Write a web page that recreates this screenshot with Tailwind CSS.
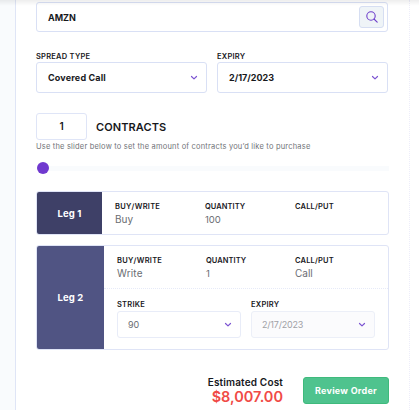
<!DOCTYPE html>
<html lang="en">
<head>
<meta charset="utf-8">
<title>Order</title>
<script src="https://cdn.jsdelivr.net/npm/@tailwindcss/browser@4"></script>
</head>
<body class="h-[410px] w-[419px] overflow-hidden bg-white font-['Inter',sans-serif] text-[9px] text-[#17181c]">
<svg class="hidden"><symbol id="chev" viewBox="0 0 8 6"><path d="M1.500 1.500 4 3.900l2.500-2.400" fill="none" stroke="#7d55d2" stroke-width="1.200" stroke-linecap="round" stroke-linejoin="round"/></symbol></svg>
<div class="relative flex h-full">
  <div class="absolute inset-x-0 top-0 h-[6px] bg-linear-to-b from-black/7 to-transparent"></div>
  <aside class="w-[15px] shrink-0 bg-[#f9fbfd]"></aside>
  <main class="flex h-full w-[395px] shrink-0 flex-col border-l border-r border-l-[#dfe5f6] border-r-[#ededfa] pr-[20px] pl-[20px] pt-[2px] [border-right-style:dotted]">
    <div class="flex h-[30px] w-[352px] shrink-0 items-center justify-between rounded-[3px] border border-[#d9e0f5] pr-[3px] pl-[11px]">
      <span class="pt-px text-[9px] font-bold">AMZN</span>
      <span class="flex h-[22px] w-[25px] items-center justify-center rounded-[3px] border border-[#d6def2] bg-[#eff4f7]">
        <svg class="h-[12px] w-[12px]" viewBox="0 0 12 12" fill="none" stroke="#6e3fcb" stroke-width="1.100" stroke-linecap="round"><circle cx="5" cy="5" r="4.200"/><path d="m8 8 3.200 3.200"/></svg>
      </span>
    </div>
    <div class="mt-[19px] flex w-[352px] shrink-0 gap-[10px]">
      <div class="w-[171px]">
        <div class="h-[11px] text-[7.5px] leading-[11px] font-semibold tracking-[0.24px] whitespace-nowrap">SPREAD TYPE</div>
        <div class="flex h-[31px] items-center justify-between rounded-[3px] border border-[#d9e0f5] pr-[8px] pl-[11px]"><span class="pt-px font-bold tracking-[0.16px]">Covered Call</span><svg class="h-[6px] w-[8px]"><use href="#chev"/></svg></div>
      </div>
      <div class="w-[171px]">
        <div class="h-[11px] text-[7.5px] leading-[11px] font-semibold tracking-[0.24px]">EXPIRY</div>
        <div class="flex h-[31px] items-center justify-between rounded-[3px] border border-[#d9e0f5] pr-[8px] pl-[11px]"><span class="pt-px font-bold">2/17/2023</span><svg class="h-[6px] w-[8px]"><use href="#chev"/></svg></div>
      </div>
    </div>
    <div class="mt-[20px] flex h-[27px] shrink-0 items-center">
      <div class="flex h-[27px] w-[51px] items-center justify-center rounded-[3px] border border-[#dfe5f7] text-[10px] font-semibold">1</div>
      <span class="ml-[9px] text-[11px] leading-[14px] font-semibold tracking-[0.1px]">CONTRACTS</span>
    </div>
    <div class="h-[13px] shrink-0 text-[7.5px] leading-[13px] tracking-[0.19px] whitespace-nowrap text-[#707378]">Use the slider below to set the amount of contracts you’d like to purchase</div>
    <div class="mt-[9px] flex h-[12px] w-[353px] shrink-0 items-center pl-[1px]">
      <span class="h-[12px] w-[12px] shrink-0 rounded-full bg-[#7039cf]"></span>
      <span class="h-[5px] flex-1 bg-[#f9fbfd]"></span>
    </div>
    <section class="mt-[17px] flex h-[44px] w-[353px] shrink-0 overflow-hidden rounded-[3px] border border-[#dfe4f6]">
      <div class="flex w-[65px] shrink-0 items-center justify-center bg-[#3e4067] pt-[2px] text-[9.5px] font-bold text-white"><span class="tracking-[0.12px]">Leg 1</span></div>
      <div class="grid grid-cols-[90px_90px_70px] pt-[9px] pl-[13px]">
        <div><div class="text-[7.5px] leading-[12px] font-semibold tracking-[0.26px]">BUY/WRITE</div><div class="text-[10px] leading-[13px] text-[#6a6d72]">Buy</div></div>
        <div><div class="text-[7.5px] leading-[12px] font-semibold tracking-[0.05px]">QUANTITY</div><div class="text-[9.5px] leading-[13px] text-[#6a6d72]">100</div></div>
        <div><div class="text-[7.5px] leading-[12px] font-semibold tracking-[0.18px]">CALL/PUT</div></div>
      </div>
    </section>
    <section class="mt-[10px] flex h-[105px] w-[353px] shrink-0 overflow-hidden rounded-[3px] border border-[#dfe4f6]">
      <div class="flex w-[67px] shrink-0 items-center justify-center bg-[#505483] pt-px text-[9.5px] font-bold text-white"><span class="tracking-[0.12px]">Leg 2</span></div>
      <div class="flex-1">
        <div class="grid h-[43px] grid-cols-[89px_89px_70px] border-b border-dotted border-[#e6eaf8] pt-[9px] pl-[13px]">
          <div><div class="text-[7.5px] leading-[12px] font-semibold tracking-[0.26px]">BUY/WRITE</div><div class="text-[10px] leading-[13px] tracking-[0.15px] text-[#6a6d72]">Write</div></div>
          <div><div class="text-[7.5px] leading-[12px] font-semibold tracking-[0.05px]">QUANTITY</div><div class="text-[9.5px] leading-[13px] text-[#6a6d72]">1</div></div>
          <div><div class="text-[7.5px] leading-[12px] font-semibold tracking-[0.18px]">CALL/PUT</div><div class="text-[10px] leading-[13px] text-[#6a6d72]">Call</div></div>
        </div>
        <div class="flex gap-[10px] pt-[9px] pl-[13px]">
          <div class="w-[124px]"><div class="h-[13px] text-[7.5px] leading-[13px] font-semibold tracking-[0.24px]">STRIKE</div>
            <div class="flex h-[27px] items-center justify-between rounded-[3px] border border-[#e8ecf8] pr-[8px] pl-[10px] text-[#6a6d72]">90<svg class="h-[6px] w-[8px]"><use href="#chev"/></svg></div></div>
          <div class="w-[124px]"><div class="h-[13px] text-[7.5px] leading-[13px] font-semibold tracking-[0.24px]">EXPIRY</div>
            <div class="flex h-[27px] items-center justify-between rounded-[3px] border border-[#eceff8] bg-[#fbfbfd] pr-[8px] pl-[10px] text-[9px] tracking-[-0.2px] text-[#a0a1a6]">2/17/2023<svg class="h-[6px] w-[8px]"><use href="#chev"/></svg></div></div>
        </div>
      </div>
    </section>
    <div class="mt-[25px] flex w-[353px] shrink-0 items-start justify-end gap-[20px]">
      <div class="text-right font-semibold"><div class="text-[10px] leading-[14px] tracking-[0.16px]">Estimated Cost</div><div class="text-[14.5px] leading-[16px] text-[#f04a46]">$8,007.00</div></div>
      <button class="mt-[2px] h-[27px] w-[86px] rounded-[3px] border border-[#3fba7c] bg-[#4fc38e] text-[9px] font-bold tracking-[0.25px] whitespace-nowrap text-white">Review Order</button>
    </div>
  </main>
</div>
</body>
</html>
